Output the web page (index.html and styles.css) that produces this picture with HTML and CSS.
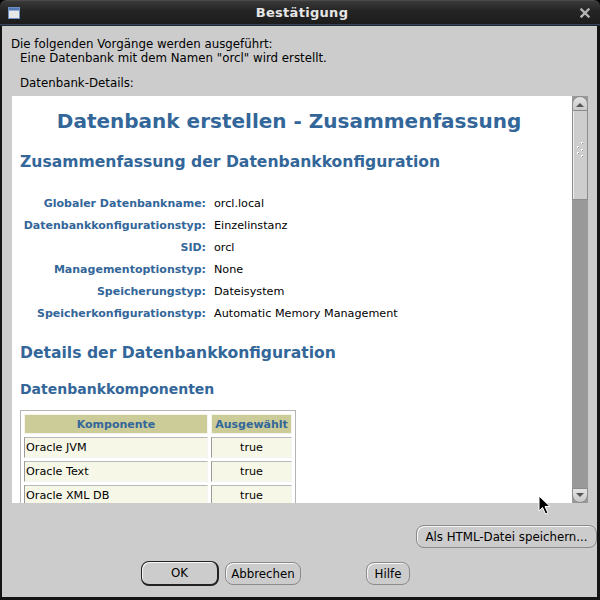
FILE: index.html
```html
<!DOCTYPE html>
<html lang="de">
<head>
<meta charset="utf-8">
<title>Bestätigung</title>
<link rel="stylesheet" href="styles.css">
</head>
<body>
<div class="window">
  <div class="titlebar">
    <svg class="win-icon" width="12" height="12" viewBox="0 0 12 12"><rect x="0.5" y="0.5" width="11" height="11" fill="#e8e8e8" stroke="#6d8fbf"/><rect x="1" y="1" width="10" height="2.5" fill="#4f79b8"/></svg>
    <div class="title">Bestätigung</div>
    <svg class="close" width="10" height="10" viewBox="0 0 10 10"><path d="M1.5 1.5 L8.5 8.5 M8.5 1.5 L1.5 8.5" stroke="#b4b4b4" stroke-width="2.4" stroke-linecap="square"/></svg>
  </div>
  <div class="accent"></div>
  <div class="body">
    <div class="line l1">Die folgenden Vorgänge werden ausgeführt:</div>
    <div class="line l2">Eine Datenbank mit dem Namen "orcl" wird erstellt.</div>
    <div class="line l3">Datenbank-Details:</div>
    <div class="panel">
      <div class="viewport">
        <h1>Datenbank erstellen - Zusammenfassung</h1>
        <h2 class="h2a">Zusammenfassung der Datenbankkonfiguration</h2>
        <div class="details">
          <div class="lab">Globaler Datenbankname:</div><div class="val">orcl.local</div>
          <div class="lab">Datenbankkonfigurationstyp:</div><div class="val">Einzelinstanz</div>
          <div class="lab">SID:</div><div class="val">orcl</div>
          <div class="lab">Managementoptionstyp:</div><div class="val">None</div>
          <div class="lab">Speicherungstyp:</div><div class="val">Dateisystem</div>
          <div class="lab">Speicherkonfigurationstyp:</div><div class="val">Automatic Memory Management</div>
        </div>
        <h2 class="h2b">Details der Datenbankkonfiguration</h2>
        <h3>Datenbankkomponenten</h3>
        <table class="comp">
          <tr><th class="c1">Komponente</th><th class="c2">Ausgewählt</th></tr>
          <tr><td class="c1">Oracle JVM</td><td class="c2">true</td></tr>
          <tr><td class="c1">Oracle Text</td><td class="c2">true</td></tr>
          <tr><td class="c1">Oracle XML DB</td><td class="c2">true</td></tr>
        </table>
      </div>
      <div class="scrollbar">
        <div class="sb-up"><span class="tri-up"></span></div>
        <div class="sb-thumb">
          <svg class="grip" width="8" height="16" viewBox="0 0 8 16"><g fill="#ffffff"><rect x="5" y="0" width="2" height="2"/><rect x="1" y="4" width="2" height="2"/><rect x="5" y="7" width="2" height="2"/><rect x="1" y="10" width="2" height="2"/><rect x="5" y="13" width="2" height="2"/></g><g fill="#8a8a8a"><rect x="6" y="1" width="1" height="1"/><rect x="2" y="5" width="1" height="1"/><rect x="6" y="8" width="1" height="1"/><rect x="2" y="11" width="1" height="1"/><rect x="6" y="14" width="1" height="1"/></g></svg>
        </div>
        <div class="sb-track"></div>
        <div class="sb-down"><span class="tri-down"></span></div>
      </div>
    </div>
    <div class="save-row">
      <button class="btn save">Als HTML-Datei speichern...</button>
    </div>
    <div class="btn-row">
      <button class="btn ok">OK</button>
      <button class="btn cancel">Abbrechen</button>
      <button class="btn help">Hilfe</button>
    </div>
  </div>
  <svg class="cursor" width="14" height="20" viewBox="0 0 14 20"><path d="M1 1 L1 16 L4.5 12.5 L7.5 19 L10 18 L7 11.5 L12 11.5 Z" fill="#000" stroke="#fff" stroke-width="1"/></svg>
</div>
</body>
</html>
```
FILE: styles.css
```css
* { box-sizing: border-box; }
html, body { margin: 0; padding: 0; }
body {
  width: 600px;
  height: 600px;
  overflow: hidden;
  background: #000;
  font-family: "DejaVu Sans", sans-serif;
}
.window {
  position: relative;
  width: 600px;
  height: 600px;
  display: flex;
  flex-direction: column;
  background: #141414;
  border-radius: 6px 6px 0 0;
  overflow: hidden;
}
.titlebar {
  height: 24px;
  flex: none;
  display: flex;
  align-items: center;
  padding: 0 10px 0 8px;
  background: linear-gradient(#3a3a3a, #252525 40%, #1c1c1c);
  border-top: 1px solid #4a4a4a;
  border-radius: 6px 6px 0 0;
}
.win-icon { flex: none; margin-top: 1px; }
.title {
  flex: 1;
  text-align: center;
  color: #e6e6e6;
  font-weight: bold;
  font-size: 13px;
  letter-spacing: 0.3px;
  padding-left: 4px;
}
.close { flex: none; margin-top: 1px; }
.accent {
  height: 2px;
  flex: none;
  background: linear-gradient(#3d5370, #1a1a1a);
}
.body {
  flex: 1;
  background: #cccccc;
  margin: 0 3px 3px 2px;
  padding: 11px 0 0 9px;
  display: flex;
  flex-direction: column;
  font-size: 11.8px;
  color: #000;
}
.line { line-height: 14px; height: 14px; white-space: nowrap; }
.l2 { padding-left: 9px; }
.l3 { padding-left: 9px; margin-top: 11px; }
.panel {
  margin-top: 6px;
  margin-left: 1px;
  width: 576px;
  height: 407px;
  display: flex;
  flex: none;
}
.viewport {
  width: 560px;
  height: 407px;
  background: #ffffff;
  overflow: hidden;
  padding: 0 0 0 8px;
  color: #336699;
}
h1 {
  margin: 11px 0 0 -8px;
  padding-right: 6px;
  font-size: 20px;
  line-height: 28px;
  height: 28px;
  font-weight: bold;
  text-align: center;
  white-space: nowrap;
}
h2 {
  margin: 0;
  font-size: 15.6px;
  line-height: 22px;
  height: 22px;
  font-weight: bold;
  white-space: nowrap;
}
.h2a { margin-top: 16px; }
.h2b { margin-top: 18px; }
h3 {
  margin: 15px 0 0 0;
  font-size: 14px;
  line-height: 20px;
  height: 20px;
  font-weight: bold;
}
.details {
  margin-top: 19px;
  display: grid;
  grid-template-columns: 186px auto;
  column-gap: 8px;
  grid-auto-rows: 22px;
  align-items: center;
  font-size: 11.2px;
}
.lab {
  text-align: right;
  font-weight: bold;
  color: #336699;
  white-space: nowrap;
  font-size: 11px;
}
.val { color: #000; white-space: nowrap; }
.comp {
  margin-top: 11px;
  border: 1px solid #b5b5b5;
  border-collapse: separate;
  border-spacing: 3px;
  font-size: 11.2px;
}
.comp th, .comp td {
  padding: 0 1px;
  height: 21px;
  border-top: 1px solid #b8b8b8;
  border-left: 1px solid #9a9a9a;
  border-right: 1px solid #f4f4f4;
  border-bottom: 1px solid #f4f4f4;
}
.comp th {
  background: #cccc99;
  color: #336699;
  font-weight: bold;
  font-size: 11px;
  text-align: center;
  height: 20px;
  border-top-color: #f4f4ea;
  border-left-color: #f4f4ea;
}
.comp td { background: #f7f7e7; color: #000; }
.comp .c1 { width: 184px; text-align: left; }
.comp th.c1 { text-align: center; }
.comp .c2 { width: 81px; text-align: center; white-space: nowrap; }
.scrollbar {
  width: 16px;
  height: 407px;
  display: flex;
  flex-direction: column;
  background: #999999;
}
.sb-up, .sb-down {
  height: 15px;
  flex: none;
  background: linear-gradient(#e4e4e4, #c8c8c8);
  border: 1px solid #8c8c8c;
  display: flex;
  align-items: center;
  justify-content: center;
}
.sb-up { border-radius: 8px 8px 0 0; }
.sb-down { border-radius: 0 0 8px 8px; }
.tri-up {
  width: 0; height: 0;
  border-left: 4px solid transparent;
  border-right: 4px solid transparent;
  border-bottom: 4px solid #555;
  margin-top: 2px;
}
.tri-down {
  width: 0; height: 0;
  border-left: 4px solid transparent;
  border-right: 4px solid transparent;
  border-top: 4px solid #555;
  margin-bottom: 2px;
}
.sb-thumb {
  height: 89px;
  flex: none;
  background: #cdcdcd;
  border: 1px solid #8c8c8c;
  border-top: none;
  box-shadow: inset 1px 0 0 #efefef;
  display: flex;
  align-items: center;
  justify-content: center;
}
.grip { margin-top: -10px; }
.sb-track { flex: 1; background: #999999; }
.save-row {
  margin-top: 22px;
  display: flex;
  justify-content: flex-end;
}
.btn {
  font-family: "DejaVu Sans", sans-serif;
  font-size: 11.8px;
  color: #000;
  background: #cccccc;
  border: 1px solid #8a8a8a;
  border-radius: 8px;
  box-shadow: inset 1px 1px 0 #f6f6f6;
  padding: 0;
  height: 23px;
  line-height: 20px;
}
.save { width: 181px; }
.btn-row {
  margin-top: 13px;
  display: flex;
  align-items: center;
  padding-left: 130px;
}
.ok {
  width: 78px;
  height: 25px;
  border: 1px solid #222;
  border-right-width: 2px;
  border-bottom-width: 2px;
}
.cancel { width: 76px; margin-left: 6px; }
.help { width: 44px; margin-left: 65px; }
.cursor {
  position: absolute;
  left: 538px;
  top: 495px;
}
```
